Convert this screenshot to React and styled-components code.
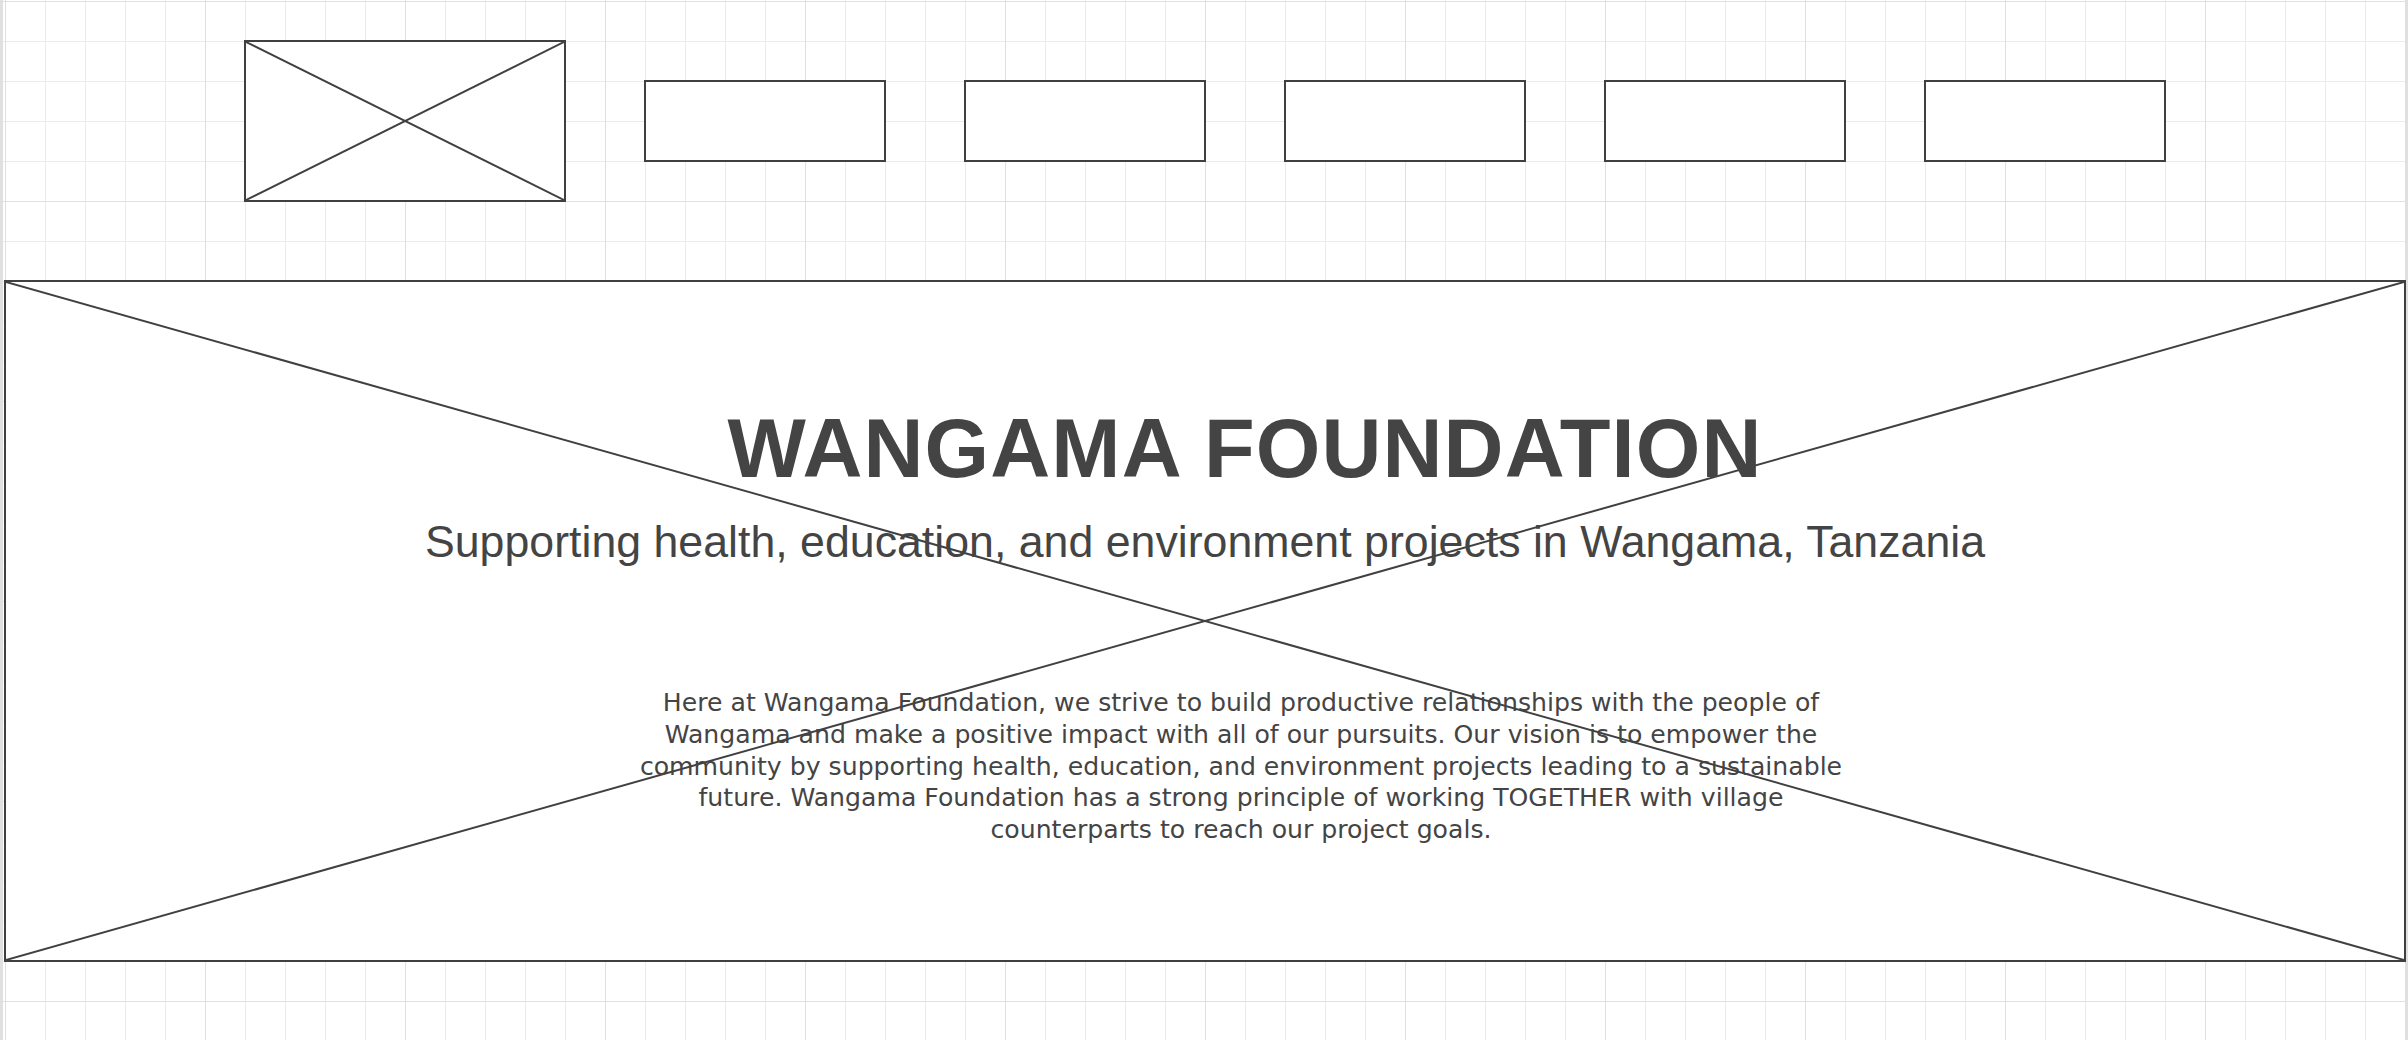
import styled, { createGlobalStyle } from 'styled-components'

const GlobalStyle = createGlobalStyle`
    html, body {
        margin: 0;
        padding: 0;
    }
    body {
        background: #fff;
        font-family: "Liberation Sans", Arial, sans-serif;
    }
`

const Page = styled.div`
    position: relative;
    width: 2408px;
    height: 1040px;
    box-sizing: border-box;
    padding-top: 40px;
    overflow: hidden;
    background-color: #fff;
    background-image:
        linear-gradient(to right, #e0e0e0 1px, transparent 1px),
        linear-gradient(to bottom, #e0e0e0 1px, transparent 1px),
        linear-gradient(to right, #ebebeb 1px, transparent 1px),
        linear-gradient(to bottom, #ebebeb 1px, transparent 1px);
    background-size: 200px 200px, 200px 200px, 40px 40px, 40px 40px;
    background-position: 5px 1px;
    box-shadow: inset 3px 0 0 #e0e0e0, inset -3px 0 0 #e0e0e0;
`

const NavRow = styled.div`
    display: flex;
    align-items: center;
    gap: 78px;
    padding-left: 244px;
`

const Frame = styled.div`
    position: relative;
    box-sizing: border-box;
    border: 2px solid #404040;
    background: #fff;
`

const Logo = styled(Frame)`
    width: 322px;
    height: 162px;
`

const NavItem = styled(Frame)`
    width: 242px;
    height: 82px;
`

const Hero = styled(Frame)`
    margin: 78px 0 0 4px;
    width: 2402px;
    height: 682px;
    display: flex;
    flex-direction: column;
    align-items: center;
    padding-top: 125px;
    color: #444;
`

const CrossSvg = styled.svg`
    position: absolute;
    inset: 0;
    width: 100%;
    height: 100%;
    pointer-events: none;

    line {
        stroke: #404040;
        stroke-width: 2;
    }
`

const Title = styled.h1`
    position: relative;
    margin: 0 0 0 80px;
    font-size: 83px;
    font-weight: 700;
    line-height: 1;
    letter-spacing: 1.15px;
    white-space: nowrap;
`

const Subtitle = styled.h2`
    position: relative;
    margin: 29.5px 0 0;
    font-size: 44.7px;
    font-weight: 400;
    line-height: 1;
    white-space: nowrap;
`

const Intro = styled.p`
    position: relative;
    margin: 123px 0 0 72px;
    width: 1240px;
    font-family: "DejaVu Sans", Verdana, sans-serif;
    font-size: 25.16px;
    line-height: 31.65px;
    text-align: center;
`

const Cross = () => (
    <CrossSvg>
        <line x1="0" y1="0" x2="100%" y2="100%" />
        <line x1="100%" y1="0" x2="0" y2="100%" />
    </CrossSvg>
)

const navItems = ['about', 'projects', 'news', 'donate', 'contact']

const App = () => (
    <>
        <GlobalStyle />
        <Page>
            <NavRow>
                <Logo>
                    <Cross />
                </Logo>
                {navItems.map((item) => (
                    <NavItem key={item} />
                ))}
            </NavRow>

            <Hero>
                <Cross />
                <Title>WANGAMA FOUNDATION</Title>
                <Subtitle>
                    Supporting health, education, and environment projects in Wangama, Tanzania
                </Subtitle>
                <Intro>
                    Here at Wangama Foundation, we strive to build productive relationships with
                    the people of Wangama and make a positive impact with all of our pursuits. Our
                    vision is to empower the community by supporting health, education, and
                    environment projects leading to a sustainable future. Wangama Foundation has a
                    strong principle of working TOGETHER with village counterparts to reach our
                    project goals.
                </Intro>
            </Hero>
        </Page>
    </>
)

export default App
